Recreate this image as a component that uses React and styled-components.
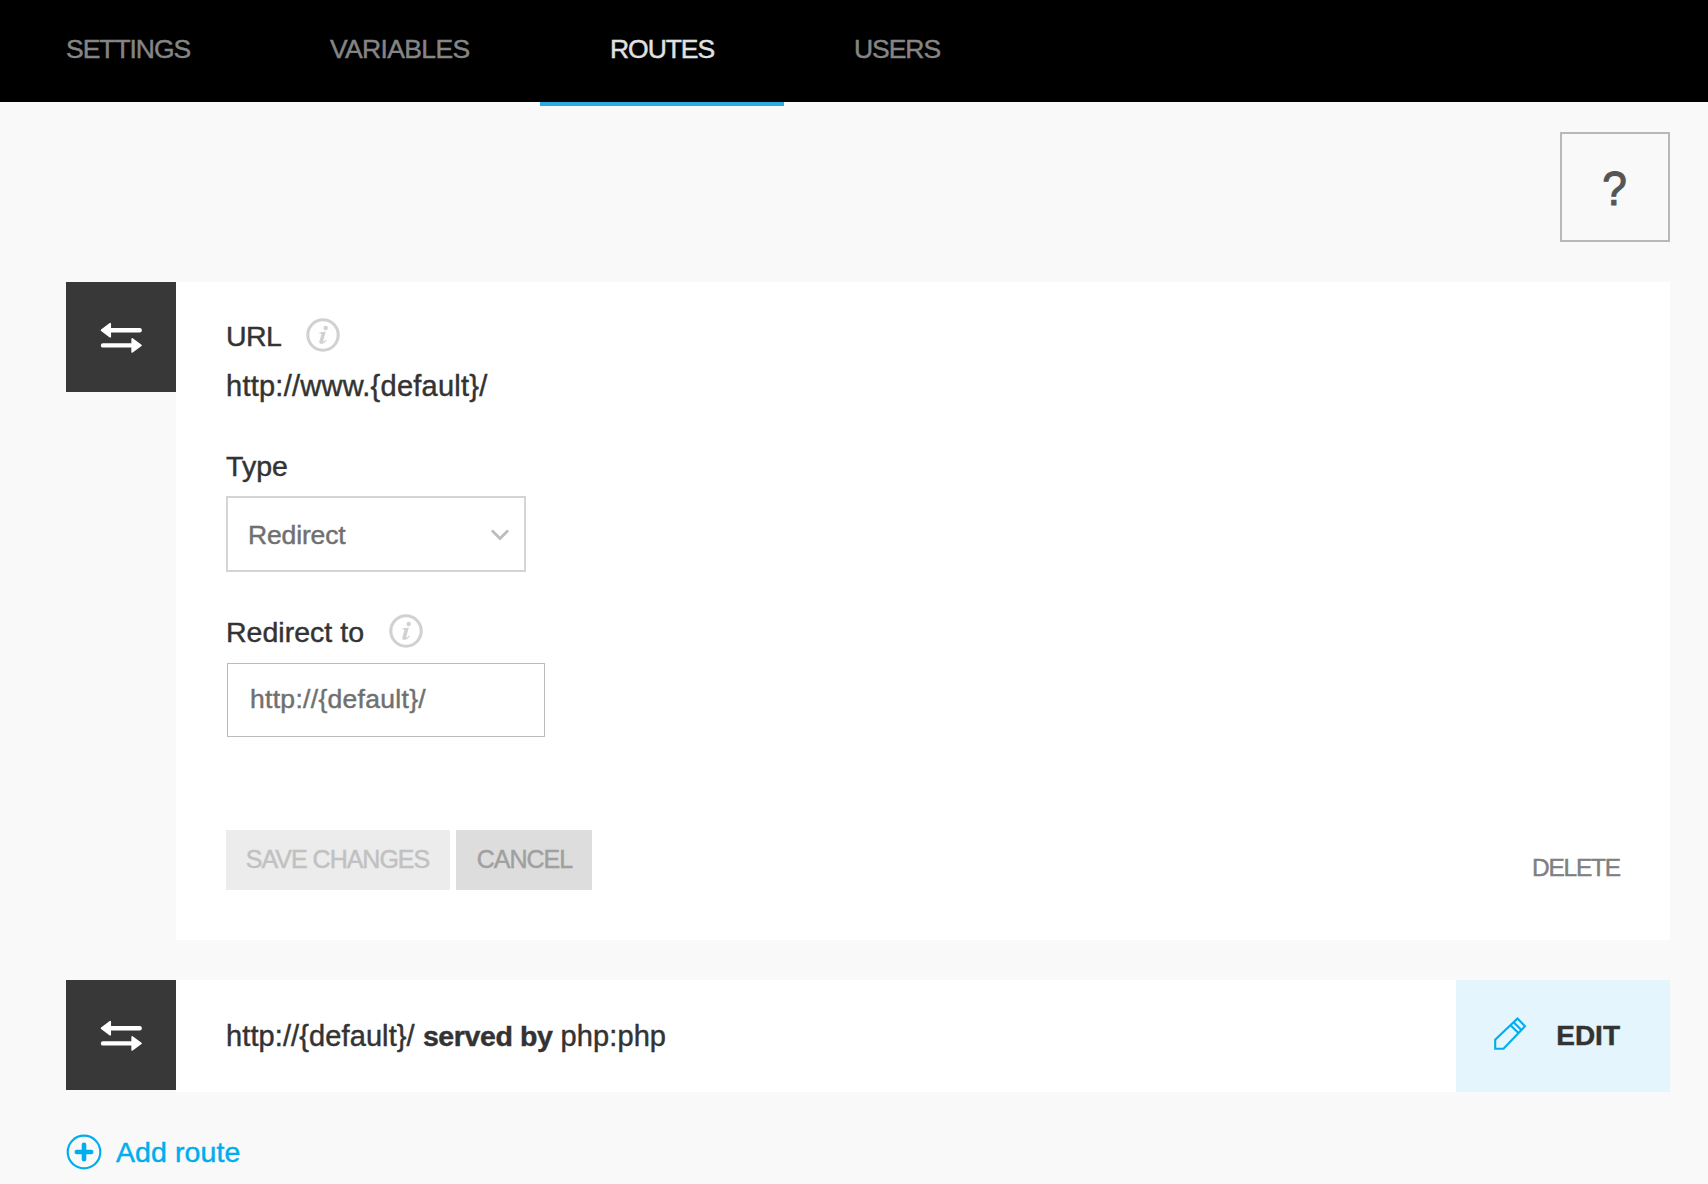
import React from "react";
import styled, { createGlobalStyle, css } from "styled-components";

const GlobalStyle = createGlobalStyle`
  *, *::before, *::after { box-sizing: border-box; }
  html, body { margin: 0; background: #f9f9f9; }
  body {
    font-family: "Liberation Sans", Arial, sans-serif;
    font-size: 28px;
    line-height: 32px;
    color: #333;
    -webkit-text-stroke: 0.45px currentColor;
  }
  button, input { font-family: inherit; -webkit-text-stroke: inherit; }
`;

const Page = styled.div`
  height: 1184px;
  overflow: hidden;
  background: #f9f9f9;
`;

const Nav = styled.nav`
  display: flex;
  height: 102px;
  background: #000;
`;

const Tab = styled.a`
  flex: none;
  width: ${(p) => p.$width}px;
  height: ${(p) => (p.$active ? 106 : 102)}px;
  padding: 34px 0 0 ${(p) => p.$indent || 70}px;
  font-size: 26.5px;
  line-height: 30px;
  letter-spacing: ${(p) => p.$tracking || -1.05}px;
  white-space: nowrap;
  color: ${(p) => (p.$active ? "#e1e1e1" : "#858585")};
  border-bottom: ${(p) => (p.$active ? "4px solid #29abe2" : "none")};
`;

const Main = styled.main`
  display: flex;
  flex-direction: column;
  padding: 30px 38px 0 66px;
`;

const HelpButton = styled.button`
  align-self: flex-end;
  width: 110px;
  height: 110px;
  margin-bottom: 40px;
  padding: 2px 0 0;
  border: 2px solid #b8b8b8;
  background: transparent;
  color: #555;
  font-size: 49px;
  line-height: 104px;
  -webkit-text-stroke: 1.2px currentColor;
`;

const HelpMark = styled.span`
  display: inline-block;
  transform: scaleX(0.9);
`;

const Route = styled.section`
  display: flex;
  align-items: flex-start;
  margin-bottom: 40px;
`;

const RouteIcon = styled.div`
  display: flex;
  flex: none;
  align-items: center;
  justify-content: center;
  width: 110px;
  height: 110px;
  background: #383838;
`;

const RouteForm = styled.form`
  display: flex;
  flex: 1;
  flex-direction: column;
  align-items: flex-start;
  height: 658px;
  padding: 34px 50px 50px;
  background: #fff;
`;

const Label = styled.label`
  display: flex;
  align-items: center;
  gap: 25px;
  height: 40px;
  padding-bottom: 1px;
  font-size: 28.5px;
  letter-spacing: ${(p) => p.$tracking || 0}px;

  svg { margin-bottom: 2px; }
`;

const Value = styled.div`
  margin: 14px 0 39px;
  height: 37px;
  font-size: 29px;
  letter-spacing: 0.25px;
`;

const fieldText = css`
  background: #fff;
  color: #707070;
  font-size: 26.5px;
  line-height: 30px;
`;

const Select = styled.div`
  ${fieldText}
  display: flex;
  align-items: center;
  justify-content: space-between;
  width: 300px;
  height: 76px;
  margin: 10px 0 40px;
  padding: 1px 15px 0 20px;
  border: 2px solid #d4d4d4;
  letter-spacing: -0.15px;
`;

const Input = styled.input`
  ${fieldText}
  width: 318px;
  height: 74px;
  margin: 11px 0 0 1px;
  padding: 0 22px 2px;
  border: 1px solid #bbb;
  border-radius: 0;
  letter-spacing: 0.3px;
`;

const Actions = styled.div`
  display: flex;
  align-self: stretch;
  gap: 6px;
  margin-top: auto;
`;

const Button = styled.button`
  width: ${(p) => p.$width}px;
  height: 60px;
  padding: ${(p) => (p.$muted ? "0 1px 2px 0" : "0 0 2px 1px")};
  border: 0;
  background: ${(p) => (p.$muted ? "#ececec" : "#ddd")};
  color: ${(p) => (p.$muted ? "#c1c1c1" : "#a0a0a0")};
  font-size: 25px;
  letter-spacing: -1px;
  white-space: nowrap;
`;

const DeleteLink = styled.a`
  margin-left: auto;
  padding-top: 22px;
  color: #808080;
  font-size: 24.5px;
  line-height: 31px;
  letter-spacing: -1.2px;
`;

const RouteSummary = styled.div`
  display: flex;
  flex: 1;
  align-items: center;
  height: 112px;
  padding-left: 50px;
  background: #fff;
`;

const SummaryText = styled.div`
  flex: 1;
  white-space: pre;
  font-size: 29px;
  letter-spacing: 0.1px;

  b {
    font-size: 28.5px;
    letter-spacing: -0.4px;
  }
`;

const EditButton = styled.button`
  display: flex;
  align-items: center;
  justify-content: space-between;
  width: 214px;
  height: 112px;
  padding: 0 50px 0 37px;
  border: 0;
  background: #e4f5fd;
  color: #333;
  font-size: 28px;
  font-weight: 700;

  svg { margin-bottom: 4px; }
`;

const AddRoute = styled.a`
  display: flex;
  align-items: center;
  gap: 14px;
  padding-top: 2px;
  color: #00adef;
  font-size: 28.5px;
  letter-spacing: 0.1px;
`;

const RouteArrows = () => (
  <svg width="42" height="32" viewBox="0 0 42 32" fill="#fff" stroke="#fff" strokeLinejoin="round" strokeLinecap="round">
    <path d="M10 9.2H39.7M3 24.4H31" strokeWidth="4.4" />
    <path d="M1.6 9.2L10.2 2.7V15.7ZM41 24.4L32.2 17.9V30.9Z" strokeWidth="1.7" />
  </svg>
);

const InfoIcon = () => (
  <svg width="34" height="34" viewBox="0 0 34 34">
    <circle cx="17" cy="17" r="15.2" fill="none" stroke="#d1d1d1" strokeWidth="3.1" />
    <circle cx="19.7" cy="10" r="2.2" fill="#d1d1d1" />
    <path d="M13.3 14.6L19.8 13.6L17.2 23.2C17.1 24.2 18.4 23.6 20 21.6L20.8 22.2C18.8 24.9 17.2 25.8 15.3 25.8C13.5 25.8 13 24.7 13.4 23.2L15.3 16.4C15.5 15.5 14.8 15.5 13.2 15.5Z" fill="#d1d1d1" />
  </svg>
);

const Chevron = () => (
  <svg width="18" height="12" viewBox="0 0 18 12">
    <path d="M1.7 2.3L9 9.5L16.3 2.3" fill="none" stroke="#bdbdbd" strokeWidth="2.8" strokeLinecap="round" />
  </svg>
);

const Pencil = () => (
  <svg width="34" height="34" viewBox="0 0 34 34" fill="none" stroke="#00adef" strokeWidth="2.1">
    <path d="M2.2 31.8V22.8L24.5 1.6L32 9.3L10.5 31.8Z" />
    <path d="M17.8 8.4L25.2 15.8M20.9 5.4L28.4 12.9" />
  </svg>
);

const PlusIcon = () => (
  <svg width="36" height="36" viewBox="0 0 36 36" fill="none" stroke="#00adef">
    <circle cx="18" cy="18" r="16.3" strokeWidth="2.2" />
    <path d="M10.8 18H25.2M18 10.8V25.2" strokeWidth="4.6" strokeLinecap="round" />
  </svg>
);

const tabs = [
  { name: "SETTINGS", width: 260, indent: 66 },
  { name: "VARIABLES", width: 280, tracking: -0.65 },
  { name: "ROUTES", width: 244, active: true },
  { name: "USERS", width: 226 },
];

export default function App() {
  return (
    <Page>
      <GlobalStyle />
      <Nav>
        {tabs.map((tab) => (
          <Tab key={tab.name} $width={tab.width} $indent={tab.indent} $active={tab.active} $tracking={tab.tracking}>
            {tab.name}
          </Tab>
        ))}
      </Nav>
      <Main>
        <HelpButton><HelpMark>?</HelpMark></HelpButton>
        <Route>
          <RouteIcon><RouteArrows /></RouteIcon>
          <RouteForm>
            <Label $tracking={-0.6}>URL<InfoIcon /></Label>
            <Value>http://www.{"{default}"}/</Value>
            <Label $tracking={0.05}>Type</Label>
            <Select>Redirect<Chevron /></Select>
            <Label $tracking={0.02}>Redirect to<InfoIcon /></Label>
            <Input defaultValue="http://{default}/" />
            <Actions>
              <Button type="button" $width={224} $muted>SAVE CHANGES</Button>
              <Button type="button" $width={136}>CANCEL</Button>
              <DeleteLink>DELETE</DeleteLink>
            </Actions>
          </RouteForm>
        </Route>
        <Route>
          <RouteIcon><RouteArrows /></RouteIcon>
          <RouteSummary>
            <SummaryText>http://{"{default}"}/ <b>served by</b> php:php</SummaryText>
            <EditButton><Pencil />EDIT</EditButton>
          </RouteSummary>
        </Route>
        <AddRoute><PlusIcon />Add route</AddRoute>
      </Main>
    </Page>
  );
}
